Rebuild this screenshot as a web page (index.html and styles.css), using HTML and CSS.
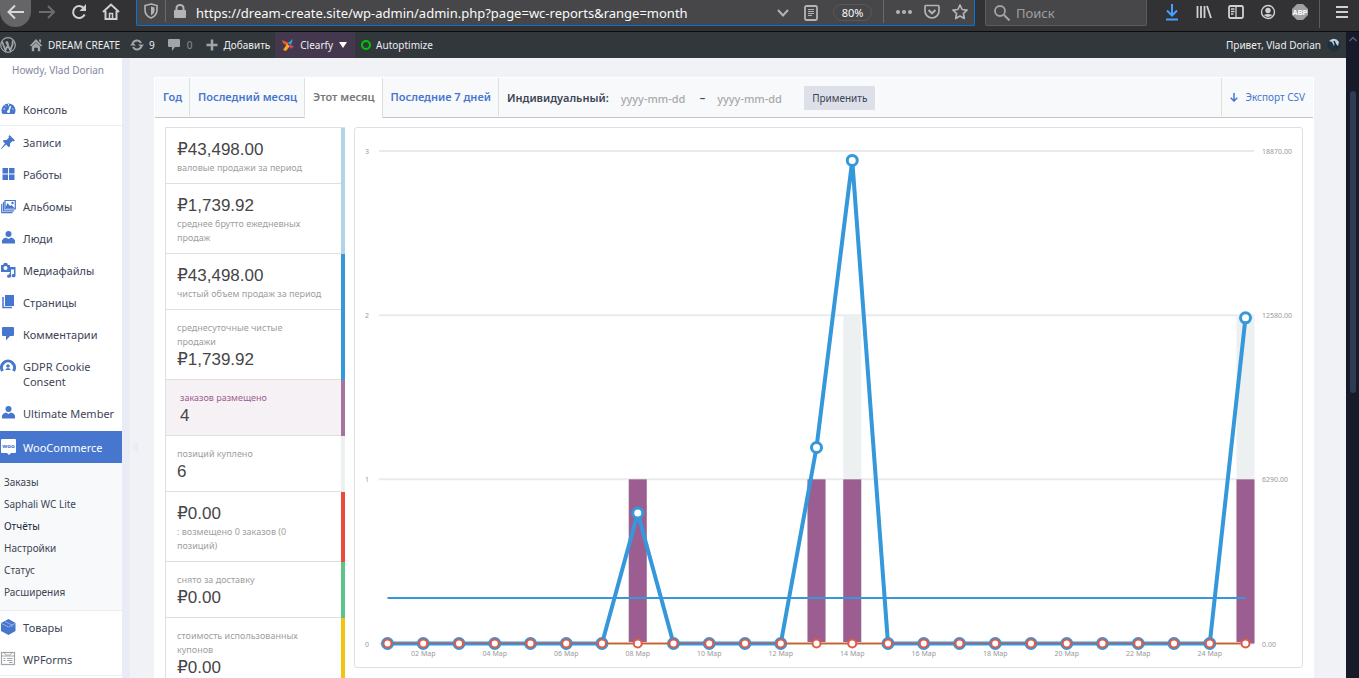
FILE: index.html
```html
<!DOCTYPE html>
<html lang="ru">
<head>
  <meta charset="UTF-8" />
  <title>Отчёты - WooCommerce</title>
  <link rel="stylesheet" href="styles.css">
</head>
<body>
  <header class="toolbar">
    <button class="back" aria-label="Назад"><svg width="18" height="16" viewBox="0 0 18 16"><path d="M17 8H2M8 1.500L1.500 8L8 14.500" fill="none" stroke="#d8d8d8" stroke-width="2"/></svg></button>
    <button class="tool" aria-label="Вперёд"><svg width="16" height="16" viewBox="0 0 16 16"><path d="M0 8H14.500M9 2L15 8L9 14" fill="none" stroke="#6c6c6e" stroke-width="2"/></svg></button>
    <button class="tool" aria-label="Обновить"><svg width="16" height="16" viewBox="0 0 16 16"><path d="M13.600 10.500A6 6 0 1 1 12.500 4" fill="none" stroke="#d0d0d0" stroke-width="2"/><path d="M15 0V7H8.500Z" fill="#d0d0d0"/></svg></button>
    <button class="tool" aria-label="Домой"><svg width="18" height="18" viewBox="0 0 18 18"><path d="M1 9L9 1.500L17 9M3.500 8V16H14.500V8" fill="none" stroke="#d0d0d0" stroke-width="2"/><path d="M7.500 16V10.500H10.500V16" fill="none" stroke="#d0d0d0" stroke-width="1.500"/></svg></button>

    <div class="urlbar">
      <svg class="shield" width="14" height="16" viewBox="0 0 14 16"><path d="M7 1L13 2.500V7C13 11 10.500 13.500 7 15C3.500 13.500 1 11 1 7V2.500Z" fill="none" stroke="#b4b4b6" stroke-width="1.600"/><path d="M7 3.500V12.500C9.500 11 10.500 9.500 10.500 7V4.400Z" fill="#b4b4b6"/></svg>
      <span class="lock"><svg width="12" height="14" viewBox="0 0 12 14"><rect x="0" y="6" width="12" height="8" rx="1" fill="#b4b4b6"/><path d="M2.500 7V4A3.500 3 0 0 1 9.500 4V7" fill="none" stroke="#b4b4b6" stroke-width="2"/></svg></span>
      <input class="url" type="text" aria-label="Адрес" value="https://dream-create.site/wp-admin/admin.php?page=wc-reports&amp;range=month" />
      <div class="url-actions">
        <svg width="12" height="8" viewBox="0 0 12 8"><path d="M1 1L6 6.500L11 1" fill="none" stroke="#b4b4b6" stroke-width="2"/></svg>
        <svg width="14" height="16" viewBox="0 0 14 16"><rect x="1" y="1" width="12" height="14" rx="1.500" fill="none" stroke="#b4b4b6" stroke-width="1.800"/><path d="M4 4.500H10M4 6.500H10M4 8.500H10M4 10.500H8" stroke="#b4b4b6"/></svg>
        <button class="zoom-level">80%</button>
      </div>
      <div class="page-actions">
        <svg width="16" height="16" viewBox="0 0 16 16"><circle cx="2" cy="8" r="2" fill="#b4b4b6"/><circle cx="8" cy="8" r="2" fill="#b4b4b6"/><circle cx="14" cy="8" r="2" fill="#b4b4b6"/></svg>
        <svg width="16" height="16" viewBox="0 0 16 16"><path d="M2 1.500H14Q15 1.500 15 2.500V7A7 7 0 0 1 1 7V2.500Q1 1.500 2 1.500Z" fill="none" stroke="#b4b4b6" stroke-width="1.700"/><path d="M4.500 6L8 9.300L11.500 6" fill="none" stroke="#b4b4b6" stroke-width="2"/></svg>
        <svg width="16" height="16" viewBox="0 0 16 16"><path d="M8 1L10.100 5.500L15 6.100L11.400 9.500L12.300 14.500L8 12L3.700 14.500L4.600 9.500L1 6.100L5.900 5.500Z" fill="none" stroke="#b4b4b6" stroke-width="1.700" stroke-linejoin="round"/></svg>
      </div>
    </div>

    <div class="search">
      <svg width="16" height="16" viewBox="0 0 16 16"><circle cx="6" cy="6" r="5" fill="none" stroke="#a4a4a6" stroke-width="1.800"/><path d="M10 10L15.500 15.500" stroke="#a4a4a6" stroke-width="2"/></svg>
      <input class="search-field" type="text" placeholder="Поиск" aria-label="Поиск" />
    </div>

    <button class="tool" aria-label="Загрузки"><svg width="16" height="18" viewBox="0 0 16 18"><path d="M8 1V12M3 7.500L8 12.500L13 7.500M2 16.500H14" fill="none" stroke="#45a1ff" stroke-width="2"/></svg></button>
    <button class="tool" aria-label="Библиотека"><svg width="16" height="16" viewBox="0 0 16 16"><path d="M1.500 2V14M5 2V14M8.500 2V14M11 2L15 14" fill="none" stroke="#d0d0d0" stroke-width="1.800"/></svg></button>
    <button class="tool" aria-label="Боковые панели"><svg width="16" height="16" viewBox="0 0 16 16"><rect x="1" y="2" width="14" height="12" rx="1.500" fill="none" stroke="#d0d0d0" stroke-width="1.800"/><path d="M8 2V14M3 5H6.500M3 7.500H6.500M3 10H5.500" stroke="#d0d0d0" stroke-width="1.300"/></svg></button>
    <button class="tool" aria-label="Аккаунт"><svg width="16" height="16" viewBox="0 0 16 16"><circle cx="8" cy="8" r="6.500" fill="none" stroke="#d0d0d0" stroke-width="1.400"/><circle cx="8" cy="6.500" r="2.700" fill="#d0d0d0"/><path d="M3.800 11Q8 9 12.200 11Q8 15 3.800 11Z" fill="#d0d0d0"/></svg></button>
    <button class="tool" aria-label="Adblock Plus"><svg width="16" height="16" viewBox="0 0 16 16"><path d="M5 0H11L16 5V11L11 16H5L0 11V5Z" fill="#a0a0a2"/><text class="abp" x="8" y="10.500">ABP</text></svg></button>
    <button class="tool menu" aria-label="Меню"><svg width="12" height="12" viewBox="0 0 12 12"><path d="M0 1H12M0 6H12M0 11H12" stroke="#d0d0d0" stroke-width="2"/></svg></button>
  </header>

  <div class="viewport">
    <div class="page">
      <nav class="adminbar">
        <a href="#" class="ab-logo" aria-label="О WordPress"><svg width="16" height="16" viewBox="0 0 16 16"><circle cx="8" cy="8" r="7.300" fill="none" stroke="#a0a5aa" stroke-width="1.200"/><path d="M2 4.500L5.500 13.500L8 7L6.800 4.500M6 4.500L10.300 13.500L12.800 6.500Q12 4 13.500 4" fill="none" stroke="#a0a5aa" stroke-width="1.800"/></svg></a>
        <a href="#" class="ab-item ab-site"><svg width="14" height="14" viewBox="0 0 14 14"><path d="M7 1L13.500 8H0.500ZM10 1.500H12V5L10 3Z" fill="#a0a5aa"/><path d="M2.500 8.500L7 4.500L11.500 8.500V13.500H8.500V10H5.500V13.500H2.500Z" fill="#a0a5aa" stroke="#32373c" stroke-width="0.600"/></svg>DREAM CREATE</a>
        <a href="#" class="ab-item ab-updates"><svg width="14" height="12" viewBox="0 0 14 12"><path d="M2.500 5A4.600 4.600 0 0 1 11 4M11.500 7A4.600 4.600 0 0 1 3 8" fill="none" stroke="#a0a5aa" stroke-width="2"/><path d="M8 5.500H14L11.500 8.500ZM0 6.500L2.800 3.500L6 6.500Z" fill="#a0a5aa"/></svg>9</a>
        <a href="#" class="ab-item ab-comments"><svg width="12" height="12" viewBox="0 0 12 12"><path d="M1 0H11Q12 0 12 1V7Q12 8 11 8H7L4 12V8H1Q0 8 0 7V1Q0 0 1 0Z" fill="#a0a5aa"/></svg>0</a>
        <a href="#" class="ab-item ab-new"><svg width="12" height="12" viewBox="0 0 12 12"><path d="M6 0.500V11.500M0.500 6H11.500" stroke="#a0a5aa" stroke-width="2.500"/></svg>Добавить</a>
        <a href="#" class="ab-item ab-clearfy"><svg width="12" height="12" viewBox="0 0 12 12"><path d="M0 1L7 4L5 7L1 4Z" fill="#f0592b"/><path d="M11 0L9 6L6 4Z" fill="#28a8e0"/><path d="M5 5L8 7L4 12L1 11Z" fill="#f7a823"/><path d="M7 6L12 7L9 10Z" fill="#e63b6f"/></svg>Clearfy<svg class="ab-arrow" width="8" height="6" viewBox="0 0 8 6"><path d="M0 0H8L4 6Z" fill="#fff"/></svg></a>
        <a href="#" class="ab-item ab-auto"><span class="ring"></span>Autoptimize</a>
        <a href="#" class="ab-item ab-user">Привет, Vlad Dorian<svg width="14" height="14" viewBox="0 0 14 14"><circle cx="7" cy="7" r="6.500" fill="#20303c"/><path d="M2 3Q8 -2 12 4L11 8L8 5L7 8L5 4Z" fill="#b9d3e4"/><path d="M7 3L10 10" stroke="#1b2833" stroke-width="1.500"/></svg></a>
      </nav>

      <div class="columns">
        <aside class="sidebar">
          <p class="howdy">Howdy, Vlad Dorian</p>
          <ul class="side-menu">
            <li class="last-in-group"><a href="#"><svg viewBox="0 0 16 16"><path d="M2.500 13A7 7 0 1 1 14.500 13Z" fill="#4676ce"/><path d="M8.500 11L10.500 5" stroke="#fff" stroke-width="1.500"/><circle cx="8.500" cy="10.500" r="1.500" fill="#fff"/><path d="M3.500 8H5M5 4.500L6 5.500M8.500 3V4.500M12.500 8H13.500" stroke="#fff"/></svg>Консоль</a></li>
            <li><a href="#"><svg viewBox="0 0 16 16"><path d="M9.500 1L15 6.500L13.500 7.500L12.500 7L10 9.500L10 12.500L8.500 13L6 10.500L1.500 15L1 14.500L5 9.500L3 7.500L3.500 6H6.500L9 3.500L8.500 2.500Z" fill="#4676ce"/></svg>Записи</a></li>
            <li><a href="#"><svg viewBox="0 0 16 16"><path d="M2.500 2H8V7.500H2.500ZM9 2H14.500V7.500H9ZM2.500 8.500H8V14H2.500ZM9 8.500H14.500V14H9Z" fill="#4676ce"/></svg>Работы</a></li>
            <li><a href="#"><svg viewBox="0 0 16 16"><path d="M5 2.500H15.300V11H5ZM3.500 4V12.800H14M1.700 6V14.600H12.500" fill="none" stroke="#4676ce" stroke-width="1.200"/><path d="M5 10.500L7.500 5L10 8L11.500 7L15 10.500Z" fill="#4676ce"/><circle cx="12.500" cy="5" r="1.200" fill="#4676ce"/></svg>Альбомы</a></li>
            <li><a href="#"><svg viewBox="0 0 16 16"><circle cx="8.500" cy="4" r="3" fill="#4676ce"/><path d="M2 13.500V10.500Q3 8 6 7.500L8.500 9L11 7.500Q14 8 15 10.500V13.500Z" fill="#4676ce"/></svg>Люди</a></li>
            <li><a href="#"><svg viewBox="0 0 16 16"><path d="M1 3H3L4 1H7L8 3H10V10H1Z" fill="#4676ce"/><circle cx="5.500" cy="6" r="2" fill="#fff"/><path d="M10 5H15.500V13.500A2 1.700 0 1 1 14 12V7.500H11V14A2 1.700 0 1 1 9.500 12.500V11H10Z" fill="#4676ce"/></svg>Медиафайлы</a></li>
            <li><a href="#"><svg viewBox="0 0 16 16"><path d="M5 1H14V12H5Z" fill="#4676ce"/><path d="M3 3V13.500H12" fill="none" stroke="#4676ce" stroke-width="1.500"/></svg>Страницы</a></li>
            <li><a href="#"><svg viewBox="0 0 16 16"><path d="M3 1H13Q14 1 14 2V9Q14 10 13 10H10L6 14.500V10H3Q2 10 2 9V2Q2 1 3 1Z" fill="#4676ce"/></svg>Комментарии</a></li>
            <li><a href="#"><svg viewBox="0 0 16 16"><path d="M2.500 13A6.500 6.500 0 1 1 13.500 13" fill="none" stroke="#4676ce" stroke-width="3"/><circle cx="8" cy="8" r="1.800" fill="#4676ce"/><path d="M5 12Q8 8 11 12Z" fill="#4676ce"/></svg>GDPR Cookie Consent</a></li>
            <li><a href="#"><svg viewBox="0 0 16 16"><circle cx="8.500" cy="4" r="3" fill="#4676ce"/><path d="M2 13.500V10.500Q3 8 6 7.500L8.500 9L11 7.500Q14 8 15 10.500V13.500Z" fill="#4676ce"/></svg>Ultimate Member</a></li>
            <li class="current">
              <a href="#"><svg viewBox="0 0 16 16"><path d="M2 0H15Q16 0 16 1V13Q16 14 15 14H11L9 16L7 14H2Q1 14 1 13V1Q1 0 2 0Z" fill="#fff"/><text class="woo" x="8.500" y="9">woo</text></svg>WooCommerce</a>
              <ul class="submenu">
                <li><a href="#">Заказы</a></li>
                <li><a href="#">Saphali WC Lite</a></li>
                <li><a href="#" class="active">Отчёты</a></li>
                <li><a href="#">Настройки</a></li>
                <li><a href="#">Статус</a></li>
                <li><a href="#">Расширения</a></li>
              </ul>
            </li>
            <li><a href="#"><svg viewBox="0 0 16 16"><path d="M8.500 0L15.500 4V12L8.500 16L1 12V4Z" fill="#4676ce"/><path d="M1.500 4.500L8.500 8L15 4.500M5 2.500L12 6V8" fill="none" stroke="#9db7e6" stroke-width="0.900"/></svg>Товары</a></li>
            <li class="last-in-group"><a href="#"><svg viewBox="0 0 16 16"><rect x="1.500" y="1.500" width="13" height="12" fill="#fff" stroke="#a0a5aa" stroke-width="1.200"/><path d="M2 5H14M4 2L7 4.500L8 3.500L9 4.500L12 2M3.500 7.500H5.500M7 7.500H12.500M3.500 9.500H5.500M7 9.500H12.500M9 11.500H12.500" fill="none" stroke="#a0a5aa"/></svg>WPForms</a></li>
          </ul>
        </aside>

        <main class="content">
          <section class="report">
            <div class="range">
              <a href="#" class="tab">Год</a>
              <a href="#" class="tab">Последний месяц</a>
              <a href="#" class="tab selected">Этот месяц</a>
              <a href="#" class="tab">Последние 7 дней</a>
              <form class="custom">
                <label for="start-date">Индивидуальный:</label>
                <input type="text" id="start-date" placeholder="yyyy-mm-dd" />
                <span>–</span>
                <input type="text" aria-label="Конечная дата" placeholder="yyyy-mm-dd" />
                <button type="button" class="apply">Применить</button>
              </form>
              <a href="#" class="export"><svg width="8" height="9" viewBox="0 0 8 9"><path d="M4 0V8M0.700 4.700L4 8L7.300 4.700" fill="none" stroke="#4676ce" stroke-width="1.500"/></svg>Экспорт CSV</a>
            </div>

            <div class="report-body">
              <ul class="legend">
                <li class="gross"><strong>₽43,498.00</strong>валовые продажи за период</li>
                <li class="gross"><strong>₽1,739.92</strong>среднее брутто ежедневных<br>продаж</li>
                <li class="net"><strong>₽43,498.00</strong>чистый объем продаж за период</li>
                <li class="net">среднесуточные чистые<br>продажи<strong>₽1,739.92</strong></li>
                <li class="orders">заказов размещено<strong>4</strong></li>
                <li class="items">позиций куплено<strong>6</strong></li>
                <li class="refunds"><strong>₽0.00</strong>: возмещено 0 заказов (0<br>позиций)</li>
                <li class="shipping">снято за доставку<strong>₽0.00</strong></li>
                <li class="coupons">стоимость использованных<br>купонов<strong>₽0.00</strong></li>
              </ul>
              <div class="chart">
                <svg id="chart" viewBox="0 0 947 539" role="img" aria-label="Продажи за месяц"></svg>
              </div>
            </div>
          </section>
        </main>
      </div>
    </div>

    <div class="scrollbar">
      <svg width="8" height="6" viewBox="0 0 8 6"><path d="M0.500 5L4 1.500L7.500 5" fill="none" stroke="#4f6080" stroke-width="1.500"/></svg>
      <div class="thumb"></div>
    </div>
  </div>

<script>
  const days = 25;
  const orders = { 8: 1, 13: 1, 14: 1, 25: 1 };
  const items = { 8: 1, 13: 1, 14: 2, 25: 2 };
  const sales = { 8: 5000, 13: 7510, 14: 18510, 25: 12478 };
  const average = 1739.92;

  const left = 24, right = 899, top0 = 23, bottom = 515.5;
  const x = (day) => 32.5 + (day - 1) * 35.75;
  const y = (count) => bottom - count / 3 * (bottom - top0);
  const money = (sum) => bottom - sum / 18870 * (bottom - top0);

  let out = "";

  // сетка и подписи осей
  for (let i = 0; i <= 3; i++) {
    out += `<line class="grid" x1="${left}" x2="${right}" y1="${y(i)}" y2="${y(i)}" />`;
    out += `<text class="axis start" x="10" y="${y(i) + 3}">${i}</text>`;
    out += `<text class="axis start" x="907" y="${y(i) + 3}">${(i * 6290).toFixed(2)}</text>`;
  }
  for (let d = 2; d <= days; d += 2) {
    out += `<text class="axis" x="${x(d)}" y="528">${String(d).padStart(2, "0")} Мар</text>`;
  }

  // столбцы
  const bars = (data, name) => {
    for (const d in data) {
      out += `<rect class="${name}" x="${x(d) - 9}" y="${y(data[d])}" width="18" height="${bottom - y(data[d])}" />`;
    }
  };
  bars(items, "bar-items");
  bars(orders, "bar-orders");

  // линии
  out += `<line class="coupon-line" x1="${x(1)}" x2="${x(days)}" y1="${bottom}" y2="${bottom}" />`;
  out += `<line class="average" x1="${x(1)}" x2="${x(days)}" y1="${money(average)}" y2="${money(average)}" />`;

  let points = "";
  for (let d = 1; d <= days; d++) {
    points += `${x(d)},${money(sales[d] || 0)} `;
  }
  out += `<polyline class="sales" points="${points}" />`;
  for (let d = 1; d <= days; d++) {
    out += `<circle class="sales-dot" cx="${x(d)}" cy="${money(sales[d] || 0)}" r="5" />`;
  }

  out += `<line class="refund-line" x1="${x(1)}" x2="${x(days)}" y1="${bottom}" y2="${bottom}" />`;
  for (let d = 1; d <= days; d++) {
    out += `<circle class="refund-dot" cx="${x(d)}" cy="${bottom}" r="4" />`;
  }

  document.getElementById("chart").innerHTML = out;
</script>
</body>
</html>
```

FILE: styles.css
```css
* {
  box-sizing: border-box;
}

body {
  margin: 0;
  height: 100vh;
  display: flex;
  flex-direction: column;
  overflow: hidden;
  font-family: "Noto Sans", "Open Sans", sans-serif;
  font-size: 10px;
  color: #3c4455;
  background: #f1f2f6;
}

ul {
  list-style: none;
  margin: 0;
  padding: 0;
}

a {
  color: inherit;
  text-decoration: none;
}

button,
input {
  font-family: inherit;
  border: none;
  padding: 0;
  background: none;
  color: inherit;
}

svg {
  flex: none;
}

/* панель браузера */
.toolbar {
  flex: none;
  display: flex;
  height: 32px;
  background: #323234;
  border-bottom: 1px solid #0c0c0d;
}

.back {
  width: 31px;
  height: 27px;
  padding: 0 0 4px;
  display: flex;
  align-items: center;
  justify-content: center;
  background: #656567;
  border-radius: 0 0 16px 16px;
}

.tool {
  width: 32px;
  height: 23px;
  display: flex;
  align-items: center;
  justify-content: center;
}

.urlbar {
  flex: 1;
  display: flex;
  align-items: center;
  height: 26px;
  margin-left: 9px;
  background: #474749;
  border: 1px solid #0a74d6;
  border-top: none;
  border-radius: 0 0 2px 2px;
}

.shield {
  margin: 0 7px 3px;
}

.lock {
  display: flex;
  align-items: center;
  height: 22px;
  margin: 0 10px 3px 0;
  padding-left: 8px;
  border-left: 1px solid #6a6a6c;
}

.url {
  flex: 1;
  min-width: 0;
  font-size: 13px;
  color: #f9f9fa;
}

.url-actions {
  display: flex;
  align-items: center;
  gap: 15px;
  padding-right: 11px;
}

.page-actions {
  display: flex;
  align-items: center;
  gap: 12px;
  height: 23px;
  padding: 0 6px 0 12px;
  margin-bottom: 2px;
  border-left: 1px solid #6a6a6c;
}

.zoom-level {
  width: 39px;
  height: 17px;
  font-size: 11px;
  color: #f9f9fa;
  border: 1px solid #58585a;
  border-radius: 9px;
}

.search {
  display: flex;
  align-items: center;
  gap: 6px;
  width: 162px;
  height: 26px;
  margin: 0 9px 0 10px;
  padding-left: 8px;
  background: #474749;
  border: 1px solid #5c5c5e;
  border-top: none;
  border-radius: 0 0 2px 2px;
}

.search-field {
  width: 120px;
  font-size: 13px;
}

.search-field::placeholder {
  color: #a0a0a2;
}

.menu {
  width: 40px;
  height: 28px;
  margin-left: 3px;
  padding: 0 0 5px 4px;
  border-left: 1px solid #5c5c5e;
}

.abp {
  font: bold 7px "Liberation Sans", sans-serif;
  fill: #fff;
  text-anchor: middle;
}

.viewport {
  flex: 1;
  min-height: 0;
  display: flex;
}

.page {
  flex: 1;
  min-width: 0;
  display: flex;
  flex-direction: column;
}

/* админ-бар */
.adminbar {
  flex: none;
  display: flex;
  height: 26px;
  background: #32373c;
  color: #eee;
}

.ab-logo,
.ab-item {
  display: flex;
  align-items: center;
  white-space: nowrap;
}

.ab-item {
  gap: 6px;
}

.ab-site {
  margin-left: 13px;
  gap: 5px;
}

.ab-updates {
  margin-left: 10px;
  gap: 5px;
}

.ab-comments {
  margin-left: 13px;
  gap: 7px;
  color: #8b9095;
}

.ab-new {
  margin-left: 13px;
}

.ab-clearfy {
  margin-left: 5px;
  padding: 0 8px 0 7px;
  background: #44384f;
}

.ab-auto {
  margin-left: 6px;
  gap: 5px;
}

.ring {
  width: 10px;
  height: 10px;
  border: 2px solid #00c800;
  border-radius: 50%;
}

.ab-user {
  margin: 0 5px 0 auto;
}

.columns {
  flex: 1;
  min-height: 0;
  display: flex;
  overflow: hidden;
}

/* меню слева */
.sidebar {
  flex: none;
  width: 122px;
  background: #fff;
}

.howdy {
  margin: 0;
  padding: 5px 6px 15px 0;
  line-height: 15px;
  text-align: center;
  color: #8387a3;
}

.side-menu > li > a {
  display: flex;
  gap: 7px;
  padding: 9px 0 8px;
  font-size: 11px;
  line-height: 15px;
}

.side-menu > li > a svg {
  width: 16px;
  height: 16px;
  margin-top: -1px;
}

.side-menu > .last-in-group {
  border-bottom: 1px solid #eceef2;
}

.side-menu > .current {
  position: relative;
  margin-top: 2px;
}

.side-menu > .current > a {
  background: #4676ce;
  color: #fff;
}

.current::after {
  content: "";
  position: absolute;
  left: 132px;
  top: 10px;
  border: 6px solid transparent;
  border-left: none;
  border-right-color: #e9ecf5;
}

.submenu {
  padding: 8px 0 7px;
  background: #f8f9fb;
  border-bottom: 1px solid #eceef2;
}

.submenu a {
  display: block;
  padding-left: 4px;
  line-height: 22px;
}

.submenu .active {
  color: #22293a;
}

.woo {
  font: bold 6px "Noto Sans", sans-serif;
  fill: #4676ce;
  text-anchor: middle;
}

.content {
  flex: 1;
  min-width: 0;
  padding: 19px 32px 0 24px;
  border-left: 8px solid #e9ecf5;
}

/* отчёт */
.report {
  background: #fff;
  border: 1px solid #fff;
}

.range {
  display: flex;
  height: 40px;
  background: #f8f9fb;
  border-bottom: 1px solid #c3c4c9;
}

.tab {
  height: 38px;
  padding: 0 7px 0 8px;
  font-size: 11px;
  font-weight: 600;
  line-height: 38px;
  color: #4676ce;
  border-right: 1px solid #dfdfdf;
}

.selected {
  height: 40px;
  background: #fff;
  color: #777;
}

.custom {
  flex: 1;
  display: flex;
  align-items: center;
  padding-left: 8px;
  font-size: 11px;
  font-weight: 600;
}

.custom input {
  width: 83px;
  padding: 2px 8px 0;
  font-size: 11px;
  font-weight: 500;
}

.custom label {
  margin-right: 4px;
}

.custom span {
  margin: 0 4px;
}

.custom input::placeholder {
  color: #a9a9a9;
}

.apply {
  height: 24px;
  margin-left: 12px;
  padding: 0 8px;
  font-size: 10px;
  background: #dde0e9;
}

.export {
  display: flex;
  align-items: center;
  gap: 7px;
  height: 38px;
  padding: 0 8px;
  color: #4676ce;
  border-left: 1px solid #dfdfdf;
}

.report-body {
  display: flex;
  align-items: flex-start;
  gap: 9px;
  padding: 9px 10px;
}

.legend {
  flex: none;
  width: 180px;
  border: 1px solid #dfdfdf;
  border-right: none;
}

.legend li {
  padding: 11px 8px 9px 11px;
  font-size: 9px;
  line-height: 14px;
  color: #a0a0a0;
  border-right: 4px solid;
  box-shadow: inset 0 -1px 0 #dfdfdf;
}

.legend strong {
  display: block;
  font: 17px/22px "Liberation Sans", "DejaVu Sans", sans-serif;
  color: #464646;
}

.legend .gross {
  border-right-color: #b1d4ea;
}

.legend .net {
  border-right-color: #3498db;
}

.legend .orders {
  padding-left: 14px;
  color: #9c5d90;
  background: #f6f1f5;
  border-right-color: #a8729e;
}

.legend .items {
  border-right-color: #ecf0f1;
}

.legend .refunds {
  border-right-color: #e74c3c;
}

.legend .shipping {
  border-right-color: #5cc488;
}

.legend .coupons {
  border-right-color: #f1c40f;
}

.chart {
  flex: 1;
  min-width: 0;
  border: 1px solid #dfdfdf;
  border-radius: 3px;
}

.chart svg {
  display: block;
  width: 100%;
}

.grid {
  stroke: #e8ebed;
  stroke-width: 2;
}

.axis {
  font-size: 7px;
  fill: #999;
  text-anchor: middle;
}

.axis.start {
  text-anchor: start;
}

.bar-items {
  fill: #ecf0f1;
}

.bar-orders {
  fill: #9c5d90;
}

.coupon-line {
  stroke: #d4c08c;
  stroke-width: 3;
}

.average {
  stroke: #3498db;
  stroke-width: 2;
}

.sales {
  fill: none;
  stroke: #3498db;
  stroke-width: 4;
  stroke-linejoin: round;
}

.sales-dot {
  fill: #fff;
  stroke: #3498db;
  stroke-width: 3;
}

.refund-line {
  stroke: #d9534a;
  stroke-width: 1;
}

.refund-dot {
  fill: #fff;
  stroke: #e05a48;
  stroke-width: 2;
}

.scrollbar {
  flex: none;
  width: 13px;
  display: flex;
  flex-direction: column;
  align-items: center;
  gap: 49px;
  padding-top: 4px;
  background: #171b29;
}

.thumb {
  width: 6px;
  height: 47%;
  border-radius: 3px;
  background: #2f3b52;
}
```
